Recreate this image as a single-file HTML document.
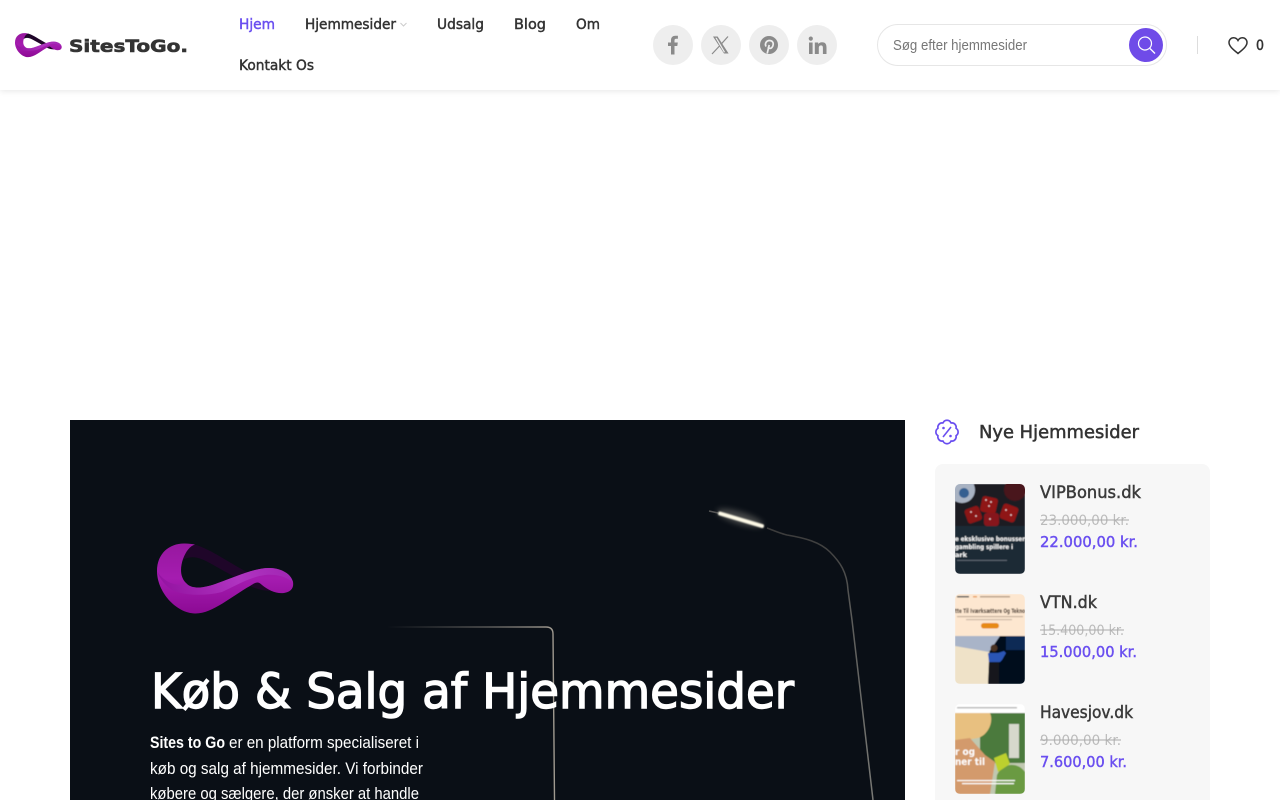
<!DOCTYPE html>
<html lang="da">
<head>
<meta charset="utf-8">
<title>SitesToGo</title>
<style>
html,body{margin:0;padding:0;width:1280px;height:800px;overflow:hidden;background:#fff}
#hdr{position:absolute;left:0;top:0;width:1280px;height:90px;background:#fff;box-shadow:0 1px 6px rgba(0,0,0,.10)}
svg#p{position:absolute;left:0;top:0}
text{font-family:"Liberation Sans",sans-serif}
.d{font-family:"DejaVu Sans",sans-serif}
.nav{font-family:"DejaVu Sans",sans-serif;font-size:14px;fill:#333;stroke:#333;stroke-width:.45px}
.pn{font-family:"DejaVu Sans",sans-serif;font-size:16.500px;fill:#3a3a3a;stroke:#3a3a3a;stroke-width:.45px}
.old{font-family:"DejaVu Sans",sans-serif;font-size:14.500px;fill:#bbb}
.new{font-family:"DejaVu Sans",sans-serif;font-size:15.500px;fill:#6a4ff0;stroke:#6a4ff0;stroke-width:.45px}
.para{font-size:17px;fill:#fff}
.t{font-family:"DejaVu Sans",sans-serif;fill:#fff;font-size:6.500px;font-weight:bold}
</style>
</head>
<body>
<div id="hdr"></div>
<svg id="p" width="1280" height="800" viewBox="0 0 1280 800" xmlns="http://www.w3.org/2000/svg">
<defs>
<linearGradient id="lg" x1="0" y1="0" x2="0" y2="1">
<stop offset="0" stop-color="#97189f"/><stop offset=".5" stop-color="#a51cb0"/><stop offset="1" stop-color="#8c0a94"/>
</linearGradient>
<linearGradient id="lg2" x1="0" y1="0" x2="1" y2="0">
<stop offset="0" stop-color="#8d0f9b"/><stop offset=".6" stop-color="#b53fc9"/><stop offset="1" stop-color="#a02ab5"/>
</linearGradient>
<linearGradient id="fade" x1="0" y1="0" x2="1" y2="0">
<stop offset="0" stop-color="#8a8680" stop-opacity="0"/><stop offset=".6" stop-color="#8a8680" stop-opacity=".6"/><stop offset="1" stop-color="#a09a90"/>
</linearGradient>
<linearGradient id="post" x1="0" y1="0" x2="0" y2="1">
<stop offset="0" stop-color="#3a3a3a"/><stop offset=".3" stop-color="#5a5a58"/><stop offset="1" stop-color="#7a7a76"/>
</linearGradient>
<g id="logo">
<path d="M195 544.500C188 546 182 553 180.500 562 190 553 202 558 215 566 226 572 240 580 250 586 258 590 268 592 280 590L272 584C262 582 255 576 247 572 228 562 212 550 195 544.500Z" fill="#1f0629"/>
<path d="M185 543.500C170 543 157 553 157 571 157 592 176 613 195 613.500 212 614 232 596 250 586 256 582 258 581 262 585 268 590 276 594 284 593 291 592 294 588 293 582 291 574 282 568.500 270 568 255 567.500 235 577 218 583 205 588 192 590 186 583 180 577 180 568 183 559 186 551 190 546 195 544.500 192 544 189 543.500 185 543.500Z" fill="url(#lg)"/>
<path d="M218 583C235 577 255 567.500 270 568 282 568.500 291 574 293 582 285 576 275 574 265 575 250 577 235 586 222 592 205 596 185 596 172 590 166 586 160 580 157 571 162 580 175 588 186 583 192 590 205 588 218 583Z" fill="url(#lg2)" opacity=".7"/>
</g>
<clipPath id="c1"><rect x="955" y="484" width="70" height="90" rx="5"/></clipPath>
<clipPath id="c2"><rect x="955" y="594" width="70" height="90" rx="5"/></clipPath>
<clipPath id="c3"><rect x="955" y="704" width="70" height="90" rx="5"/></clipPath>
<filter id="b" x="-10%" y="-10%" width="120%" height="120%"><feGaussianBlur stdDeviation=".5"/></filter>
<filter id="b2" x="-100%" y="-300%" width="300%" height="700%"><feGaussianBlur stdDeviation="3"/></filter>
<filter id="b4" x="-20%" y="-200%" width="140%" height="500%"><feGaussianBlur stdDeviation=".7"/></filter>
</defs>

<!-- header logo -->
<g transform="translate(15,33) scale(.343) translate(-157,-543)"><use href="#logo"/></g>
<text class="d" x="69" y="52" font-size="17" font-weight="bold" fill="#333" stroke="#333" stroke-width=".6" textLength="119" lengthAdjust="spacingAndGlyphs">SitesToGo.</text>

<!-- nav -->
<text class="nav" x="239" y="29" textLength="36" lengthAdjust="spacingAndGlyphs" style="fill:#6a4ff0;stroke:#6a4ff0">Hjem</text>
<text class="nav" x="305" y="29" textLength="91" lengthAdjust="spacingAndGlyphs">Hjemmesider</text>
<path d="M400.500 23l3 3 3-3" fill="none" stroke="#ccc" stroke-width="1"/>
<text class="nav" x="437" y="29" textLength="47" lengthAdjust="spacingAndGlyphs">Udsalg</text>
<text class="nav" x="514" y="29" textLength="32" lengthAdjust="spacingAndGlyphs">Blog</text>
<text class="nav" x="576" y="29" textLength="24" lengthAdjust="spacingAndGlyphs">Om</text>
<text class="nav" x="239" y="70" textLength="75" lengthAdjust="spacingAndGlyphs">Kontakt Os</text>

<!-- social -->
<circle cx="673" cy="45" r="20" fill="#eee"/>
<circle cx="721" cy="45" r="20" fill="#eee"/>
<circle cx="769" cy="45" r="20" fill="#eee"/>
<circle cx="817" cy="45" r="20" fill="#eee"/>
<path d="M671 54.500v-8.500h-3v-3.500h3v-2.300c0-3 1.800-4.500 4.400-4.500 1.200 0 2.200.1 2.500.1v3h-1.700c-1.400 0-1.700.7-1.700 1.700v2h3.300l-.5 3.500h-2.800v8.500z" fill="#8a8a8a"/>
<path d="M713 36.500h4.600l11 17h-4.600zM715.300 37.700l8.500 14.600h1.400l-8.500-14.600z" fill="#8a8a8a" fill-rule="evenodd"/>
<path d="M728 36.500l-7 7.800M719.500 46l-7.500 8" fill="none" stroke="#8a8a8a" stroke-width="1.200"/>
<circle cx="769" cy="45" r="9" fill="#8a8a8a"/>
<path d="M767.200 53.500l2-8.500M766 46.500c-1.500-3 .5-6 3.500-6 2.500 0 4 1.700 3.700 4-.3 2.600-2 4.200-3.600 3.800-.8-.2-1.300-.8-1.300-1.400" fill="none" stroke="#eee" stroke-width="1.700"/>
<path d="M809 42.500h3.600v11.500h-3.600zM810.800 36.500a2.100 2.100 0 1 1 0 4.200 2.100 2.100 0 0 1 0-4.200zM814.800 42.500h3.400v1.600c.6-1 1.900-1.900 3.800-1.900 3.700 0 4.500 2.400 4.500 5.600v6.200h-3.600v-5.500c0-1.400 0-3.100-1.900-3.100s-2.200 1.500-2.200 3v5.600h-4z" fill="#8a8a8a"/>

<!-- search -->
<rect x="877.500" y="24.500" width="289" height="41" rx="20.500" fill="#fff" stroke="#e6e6e6"/>
<text x="893" y="50" font-size="14.500" fill="#777" textLength="134" lengthAdjust="spacingAndGlyphs">Søg efter hjemmesider</text>
<circle cx="1146" cy="45" r="17" fill="#6f4be8"/>
<circle cx="1145" cy="43.500" r="6.500" fill="none" stroke="#fff" stroke-width="1.200"/>
<path d="M1150 48.500l5 5" stroke="#fff" stroke-width="1.300" fill="none"/>
<rect x="1197" y="36" width="1" height="18" fill="#ddd"/>
<path d="M1238 53.500c-3.500-3-9-6.800-9-11 0-2.700 2-4.700 4.600-4.700 1.800 0 3.400 1 4.400 2.700 1-1.700 2.600-2.700 4.400-2.700 2.600 0 4.600 2 4.600 4.700 0 4.200-5.500 8-9 11z" fill="none" stroke="#333" stroke-width="1.500"/>
<text class="d" x="1256" y="50" font-size="14" fill="#333" stroke="#333" stroke-width=".5" textLength="8" lengthAdjust="spacingAndGlyphs">0</text>

<!-- hero -->
<rect x="70" y="420" width="835" height="380" fill="#0a0f16"/>
<path d="M387 627H546Q553 627 553 634L554.500 800" fill="none" stroke="url(#fade)" stroke-width="1.400"/>
<path d="M767 528C775 531 782 534 787 535 805 538 820 542 830 552 840 562 847 572 848 590L852 620 873 800" fill="none" stroke="url(#post)" stroke-width="1.500"/>
<ellipse cx="740" cy="518" rx="24" ry="6" fill="#8f8d85" opacity=".45" transform="rotate(17 740 518)" filter="url(#b2)"/>
<path d="M709 511L718 513" stroke="#555" stroke-width="1.500"/>
<path d="M720 513.500L762 526" stroke="#fffbe8" stroke-width="4" stroke-linecap="round" filter="url(#b4)"/>
<g><use href="#logo"/></g>
<text class="d" x="151" y="708" font-size="48" fill="#fff" stroke="#fff" stroke-width="1.400" textLength="643" lengthAdjust="spacingAndGlyphs">Køb &amp; Salg af Hjemmesider</text>
<text class="para" x="150" y="748" font-weight="bold" textLength="75" lengthAdjust="spacingAndGlyphs">Sites to Go</text>
<text class="para" x="229" y="748" textLength="190" lengthAdjust="spacingAndGlyphs">er en platform specialiseret i</text>
<text class="para" x="150" y="774" textLength="273" lengthAdjust="spacingAndGlyphs">køb og salg af hjemmesider. Vi forbinder</text>
<text class="para" x="150" y="799" textLength="269" lengthAdjust="spacingAndGlyphs">købere og sælgere, der ønsker at handle</text>

<!-- sidebar head -->
<path d="M951 423A4.300 4.300 0 0 1 956 428.300A4.300 4.300 0 0 1 956 435.700A4.300 4.300 0 0 1 951 441A4.300 4.300 0 0 1 943 441A4.300 4.300 0 0 1 938 435.700A4.300 4.300 0 0 1 938 428.300A4.300 4.300 0 0 1 943 423A4.300 4.300 0 0 1 951 423Z" fill="none" stroke="#6a4ff0" stroke-width="1.700" stroke-linejoin="round"/>
<path d="M943 437l8-10" stroke="#6a4ff0" stroke-width="1.600"/>
<circle cx="943.500" cy="428" r="1.300" fill="#6a4ff0"/><circle cx="950.500" cy="436" r="1.300" fill="#6a4ff0"/>
<text class="d" x="979" y="438" font-size="18" fill="#333" stroke="#333" stroke-width=".5" textLength="160" lengthAdjust="spacingAndGlyphs">Nye Hjemmesider</text>

<!-- panel -->
<rect x="935" y="464" width="275" height="345" rx="8" fill="#f7f7f7"/>

<!-- thumb 1 -->
<g clip-path="url(#c1)"><g filter="url(#b)">
<rect x="955" y="484" width="70" height="42" fill="#1c1a20"/>
<circle cx="962" cy="490" r="13" fill="#a8b2c2"/><circle cx="964" cy="493" r="5" fill="#355f90"/>
<circle cx="1015" cy="490" r="11" fill="#4a161c"/>
<rect x="981" y="497" width="16" height="16" rx="3" fill="#8f1419" transform="rotate(12 989 505)"/>
<rect x="966" y="507" width="15" height="15" rx="3" fill="#8a1218" transform="rotate(-20 974 515)"/>
<rect x="984" y="513" width="15" height="13" rx="3" fill="#86121a"/>
<rect x="1001" y="505" width="16" height="16" rx="3" fill="#8f1419" transform="rotate(20 1009 513)"/>
<g fill="#e8d8d8"><circle cx="986" cy="500" r=".9"/><circle cx="991" cy="502" r=".9"/><circle cx="989" cy="506" r=".9"/><circle cx="971" cy="512" r=".9"/><circle cx="976" cy="516" r=".9"/><circle cx="1006" cy="510" r=".9"/><circle cx="1011" cy="515" r=".9"/><circle cx="990" cy="519" r=".9"/></g>
<rect x="955" y="526" width="70" height="48" fill="#1f2a36"/>
<text class="t" x="955" y="541" textLength="70" lengthAdjust="spacingAndGlyphs">e eksklusive bonusser</text>
<text class="t" x="955" y="549" textLength="58" lengthAdjust="spacingAndGlyphs">gambling spillere i</text>
<text class="t" x="955" y="557" textLength="12" lengthAdjust="spacingAndGlyphs">ark</text>
<rect x="957" y="560" width="50" height=".8" fill="#6d7580"/>
</g></g>

<!-- thumb 2 -->
<g clip-path="url(#c2)"><g filter="url(#b)">
<rect x="955" y="594" width="70" height="42" fill="#fde7d0"/>
<text class="t" x="955" y="613" textLength="70" lengthAdjust="spacingAndGlyphs" style="fill:#3a2c22">tte Til Iværksættere Og Tekno</text>
<rect x="957" y="596" width="12" height="1.500" fill="#555"/><rect x="973" y="596" width="4" height="1.500" fill="#e8a060"/><rect x="980" y="596" width="30" height="1.500" fill="#b9a08a"/>
<rect x="957" y="616" width="66" height="1.200" fill="#c4b09c"/><rect x="966" y="619" width="46" height="1.200" fill="#ccb9a6"/>
<rect x="981" y="623" width="18" height="5.500" rx="2.700" fill="#e78a14"/>
<rect x="955" y="636" width="70" height="48" fill="#050a1a"/>
<path d="M955 636H990L988 684H955Z" fill="#efe2c8"/>
<path d="M955 636H1000L989 652 955 646Z" fill="#a9b4c8"/>
<rect x="1006" y="636" width="19" height="14" fill="#0e2a55"/>
<rect x="989" y="660" width="10" height="24" fill="#15151a"/>
<circle cx="994" cy="648" r="3.500" fill="#4a3020"/>
<path d="M988 653h10l6-2 2 2-4 7-2 2h-11z" fill="#2b55b5"/>
</g></g>

<!-- thumb 3 -->
<g clip-path="url(#c3)"><g filter="url(#b)">
<rect x="955" y="704" width="70" height="90" fill="#fff"/>
<rect x="957" y="707" width="60" height="1.500" fill="#bbb"/>
<rect x="955" y="713" width="70" height="81" fill="#c0c8b0"/>
<rect x="980" y="713" width="45" height="50" fill="#4c7a3c"/>
<rect x="1009" y="724" width="10" height="34" fill="#d6d8cc"/>
<path d="M955 713H990C994 722 988 735 978 738L955 742Z" fill="#e8c080"/>
<path d="M955 740L970 738 985 755 995 762 990 794H955Z" fill="#d39a6c"/>
<path d="M997 775C1003 762 1018 762 1025 772V794H995Z" fill="#6a9a42"/>
<path d="M994 758L1006 753 1010 764 998 772Z" fill="#bcd02e"/>
<text class="t" x="955" y="755" style="font-size:10px" textLength="20" lengthAdjust="spacingAndGlyphs">r og</text>
<text class="t" x="955" y="765" style="font-size:10px" textLength="30" lengthAdjust="spacingAndGlyphs">ner til</text>
<rect x="957" y="780" width="58" height="1.200" fill="#fff"/><rect x="962" y="783" width="52" height="1.200" fill="#fff"/>
</g></g>

<!-- products -->
<text class="pn" x="1040" y="498" textLength="101" lengthAdjust="spacingAndGlyphs">VIPBonus.dk</text>
<text class="old" x="1040" y="525" textLength="89" lengthAdjust="spacingAndGlyphs">23.000,00 kr.</text>
<rect x="1040" y="519.500" width="89" height="1" fill="#aaa"/>
<text class="new" x="1040" y="547" textLength="98" lengthAdjust="spacingAndGlyphs">22.000,00 kr.</text>

<text class="pn" x="1040" y="608" textLength="57" lengthAdjust="spacingAndGlyphs">VTN.dk</text>
<text class="old" x="1040" y="635" textLength="84" lengthAdjust="spacingAndGlyphs">15.400,00 kr.</text>
<rect x="1040" y="629.500" width="84" height="1" fill="#aaa"/>
<text class="new" x="1040" y="657" textLength="97" lengthAdjust="spacingAndGlyphs">15.000,00 kr.</text>

<text class="pn" x="1040" y="718" textLength="93" lengthAdjust="spacingAndGlyphs">Havesjov.dk</text>
<text class="old" x="1040" y="745" textLength="81" lengthAdjust="spacingAndGlyphs">9.000,00 kr.</text>
<rect x="1040" y="739.500" width="81" height="1" fill="#aaa"/>
<text class="new" x="1040" y="767" textLength="87" lengthAdjust="spacingAndGlyphs">7.600,00 kr.</text>
</svg>
</body>
</html>
